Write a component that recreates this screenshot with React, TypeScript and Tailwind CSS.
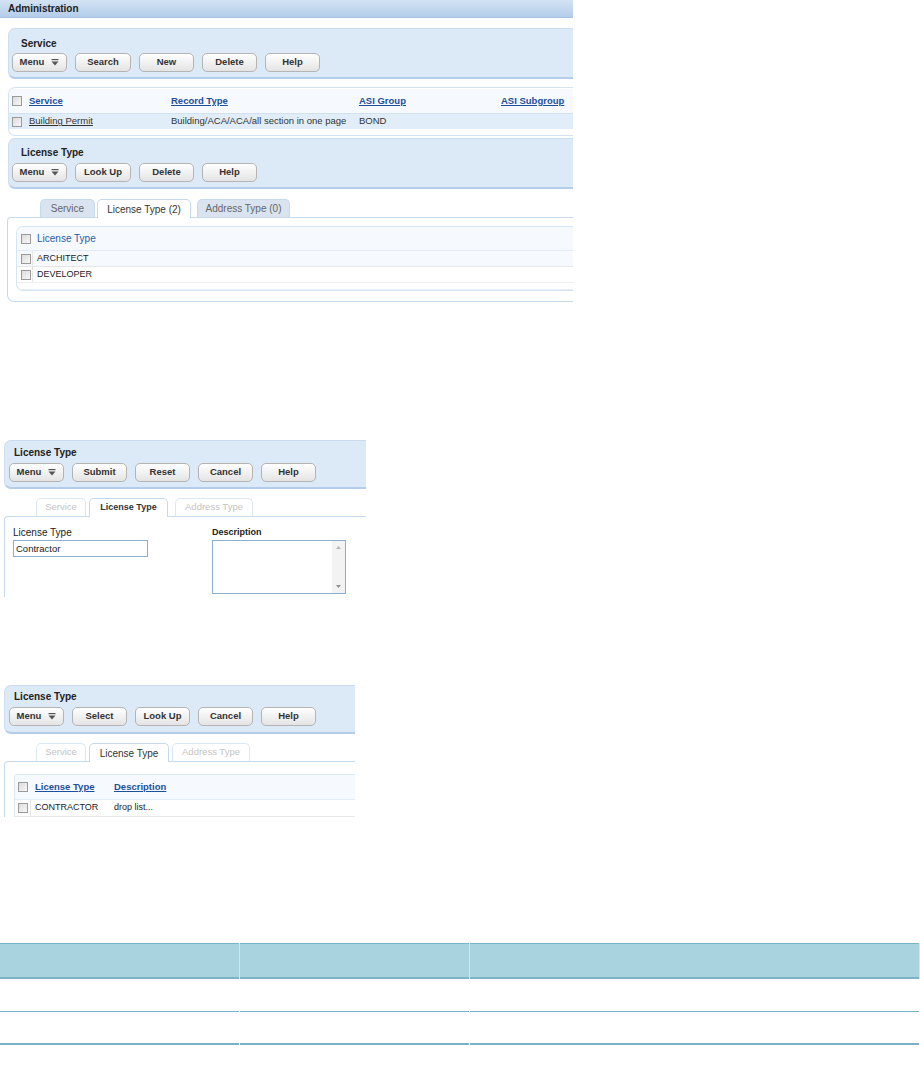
import React from "react";

const font = { fontFamily: '"Liberation Sans", Arial, sans-serif' };

function MenuIcon() {
  return (
    <svg width="8" height="7" viewBox="0 0 8 7" className="ml-[7px]">
      <rect x="0.5" y="0" width="7" height="1.2" fill="#555" />
      <path d="M0.5 2.6 H7.5 L4 6.4 Z" fill="#555" />
    </svg>
  );
}

function Btn({ label, menu, w = 55 }: { label: string; menu?: boolean; w?: number }) {
  return (
    <div
      className="h-[19px] flex items-center justify-center rounded-[5px] border border-[#b4b4b4] bg-gradient-to-b from-[#ffffff] to-[#e4e4e4] text-[9.5px] font-bold text-[#333] whitespace-nowrap shadow-[inset_0_1px_0_#fff]"
      style={{ width: w }}
    >
      {label}
      {menu && <MenuIcon />}
    </div>
  );
}

function Check() {
  return (
    <span className="inline-block w-[10px] h-[10px] border border-[#9a9a9a] bg-gradient-to-br from-[#dcdcdc] to-[#f8f8f8] shrink-0" />
  );
}

function ActionPanel({
  title,
  buttons,
  className,
  titlePad,
  btnPad,
}: {
  title: string;
  buttons: { label: string; menu?: boolean; w?: number }[];
  className: string;
  titlePad: string;
  btnPad: string;
}) {
  return (
    <div
      className={
        "rounded-l-[7px] bg-[#dce9f6] border-t border-t-[#cbdcef] border-b-2 border-b-[#b3cdea] border-l border-l-[#cfdff0] " +
        className
      }
    >
      <div className={"text-[10px] font-bold text-[#222] leading-[13px] whitespace-nowrap " + titlePad}>{title}</div>
      <div className={"flex gap-[8px] " + btnPad}>
        {buttons.map((b) => (
          <Btn key={b.label} label={b.label} menu={b.menu} w={b.w} />
        ))}
      </div>
    </div>
  );
}

function Tab({
  label,
  state,
  w,
  bold,
}: {
  label: string;
  state: "active" | "inactive" | "disabled";
  w: number;
  bold?: boolean;
}) {
  const cls =
    state === "active"
      ? "bg-white text-[#333] border-[#c6daee] h-[19px] -mb-px text-[10px]"
      : state === "inactive"
      ? "bg-[#d9e4f0] text-[#666] border-[#c6daee] h-[18px] text-[10px]"
      : "bg-white text-[#c4c4c4] border-[#dde8f3] h-[18px] text-[9.5px]";
  return (
    <div
      className={
        "flex items-center justify-center rounded-t-[5px] border border-b-0 whitespace-nowrap " +
        cls +
        (bold ? " font-bold !text-[9px]" : "")
      }
      style={{ width: w }}
    >
      {label}
    </div>
  );
}

export default function App() {
  return (
    <div className="w-[920px] min-h-[1079px] bg-white" style={font}>
      {/* Section 1 */}
      <div className="w-[573px] h-[305px] overflow-hidden">
        <div className="h-[18px] bg-gradient-to-b from-[#d3e3f3] to-[#b4cdea] border-b border-b-[#a6c3e4] pl-[8px] text-[10px] font-bold text-[#222] leading-[17px]">
          Administration
        </div>
        <div className="pl-[8px] pt-[10px]">
          <ActionPanel
            title="Service"
            className="h-[51px]"
            titlePad="pl-[12px] pt-[8px]"
            btnPad="pl-[3px] pt-[3px]"
            buttons={[
              { label: "Menu", menu: true, w: 55 },
              { label: "Search", w: 56 },
              { label: "New", w: 55 },
              { label: "Delete", w: 55 },
              { label: "Help", w: 55 },
            ]}
          />
          {/* service table */}
          <div className="mt-[8px] h-[49px] rounded-l-[7px] border border-r-0 border-[#d3e3f2] bg-white overflow-hidden">
            <div className="h-[24px] mt-[1px] bg-[#f6f9fd] flex items-center text-[9.5px] font-bold whitespace-nowrap">
              <div className="w-[20px] pl-[3px] flex items-center">
                <Check />
              </div>
              <div className="w-[142px] text-[#1d4f9a] underline">Service</div>
              <div className="w-[188px] text-[#1d4f9a] underline">Record Type</div>
              <div className="w-[142px] text-[#1d4f9a] underline">ASI Group</div>
              <div className="text-[#1d4f9a] underline">ASI Subgroup</div>
            </div>
            <div className="h-[16px] bg-[#e1eef9] border-t border-[#d0e2f2] flex items-center text-[9.5px] text-[#333] whitespace-nowrap">
              <div className="w-[20px] pl-[3px] flex items-center">
                <Check />
              </div>
              <div className="w-[142px] underline">Building Permit</div>
              <div className="w-[188px]">Building/ACA/ACA/all section in one page</div>
              <div className="w-[142px]">BOND</div>
            </div>
          </div>
          <ActionPanel
            title="License Type"
            className="h-[51px] mt-[2px]"
            titlePad="pl-[12px] pt-[7px]"
            btnPad="pl-[3px] pt-[4px]"
            buttons={[
              { label: "Menu", menu: true, w: 55 },
              { label: "Look Up", w: 56 },
              { label: "Delete", w: 55 },
              { label: "Help", w: 55 },
            ]}
          />
        </div>
        {/* tabs */}
        <div className="pl-[7px] mt-[10px]">
          <div className="flex items-end gap-[2px] pl-[33px] h-[18px]">
            <Tab label="Service" state="inactive" w={55} />
            <Tab label="License Type (2)" state="active" w={94} />
            <div className="w-[2px]" />
            <Tab label="Address Type (0)" state="inactive" w={93} />
          </div>
          <div className="h-[85px] rounded-bl-[7px] rounded-tl-[4px] border border-r-0 border-[#c6daee] pl-[8px] pt-[8px]">
            <div className="h-[65px] rounded-l-[7px] border border-r-0 border-[#d6e5f3] overflow-hidden">
              <div className="h-[24px] bg-[#f6f9fd] flex items-center text-[10px] text-[#1f5cab] border-b border-[#e2ecf6]">
                <div className="w-[16px] pl-[4px] flex items-center">
                  <Check />
                </div>
                <div className="pl-[4px]">License Type</div>
              </div>
              <div className="h-[16px] bg-[#f6f9fd] flex items-center text-[9px] text-[#222] border-b border-[#e6e6e6]">
                <div className="w-[16px] h-full pl-[4px] flex items-center border-r border-[#e6e6e6]">
                  <Check />
                </div>
                <div className="pl-[4px]">ARCHITECT</div>
              </div>
              <div className="h-[16px] flex items-center text-[9px] text-[#222] border-b border-[#eeeeee]">
                <div className="w-[16px] h-full pl-[4px] flex items-center border-r border-[#e6e6e6]">
                  <Check />
                </div>
                <div className="pl-[4px]">DEVELOPER</div>
              </div>
              <div className="h-[7px] border-b border-[#e6eef6]" />
            </div>
          </div>
        </div>
      </div>

      {/* Section 2 */}
      <div className="w-[366px] h-[157px] mt-[135px] overflow-hidden">
        <div className="pl-[4px]">
          <ActionPanel
            title="License Type"
            className="h-[49px]"
            titlePad="pl-[9px] pt-[5px]"
            btnPad="pl-[4px] pt-[4px]"
            buttons={[
              { label: "Menu", menu: true, w: 55 },
              { label: "Submit", w: 55 },
              { label: "Reset", w: 55 },
              { label: "Cancel", w: 55 },
              { label: "Help", w: 55 },
            ]}
          />
        </div>
        <div className="pl-[4px] mt-[9px]">
          <div className="flex items-end gap-[3px] pl-[32px] h-[18px]">
            <Tab label="Service" state="disabled" w={50} />
            <Tab label="License Type" state="active" w={79} bold />
            <div className="w-px" />
            <Tab label="Address Type" state="disabled" w={78} />
          </div>
          <div className="h-[82px] rounded-tl-[4px] border-t border-l border-[#c6daee] flex pt-[9px]">
            <div className="w-[207px] pl-[8px]">
              <div className="text-[10px] text-[#222] leading-[13px]">License Type</div>
              <div className="mt-[1px] w-[135px] h-[17px] border border-[#8eaed0] text-[9.5px] text-[#222] pl-[2px] leading-[15px]">
                Contractor
              </div>
            </div>
            <div>
              <div className="text-[9px] font-bold text-[#222] leading-[13px]">Description</div>
              <div className="mt-[1px] w-[134px] h-[54px] border border-[#8eaed0] flex justify-end">
                <div className="w-[13px] h-full bg-[#f3f3f3] flex flex-col items-center justify-between py-[5px]">
                  <svg width="5" height="3" viewBox="0 0 5 3">
                    <path d="M0 3 L2.5 0 L5 3 Z" fill="#b8b8b8" />
                  </svg>
                  <svg width="5" height="3" viewBox="0 0 5 3">
                    <path d="M0 0 L2.5 3 L5 0 Z" fill="#909090" />
                  </svg>
                </div>
              </div>
            </div>
          </div>
        </div>
      </div>

      {/* Section 3 */}
      <div className="w-[355px] h-[132px] mt-[88px] overflow-hidden">
        <div className="pl-[4px]">
          <ActionPanel
            title="License Type"
            className="h-[49px]"
            titlePad="pl-[9px] pt-[4px]"
            btnPad="pl-[4px] pt-[4px]"
            buttons={[
              { label: "Menu", menu: true, w: 55 },
              { label: "Select", w: 55 },
              { label: "Look Up", w: 55 },
              { label: "Cancel", w: 55 },
              { label: "Help", w: 55 },
            ]}
          />
        </div>
        <div className="pl-[4px] mt-[8px]">
          <div className="flex items-end gap-[3px] pl-[32px] h-[19px]">
            <Tab label="Service" state="disabled" w={50} />
            <Tab label="License Type" state="active" w={80} />
            <Tab label="Address Type" state="disabled" w={78} />
          </div>
          <div className="h-[60px] rounded-tl-[4px] border-t border-l border-[#c6daee] pl-[9px] pt-[12px]">
            <div className="border-t border-l border-[#dde8f3] rounded-tl-[3px]">
              <div className="h-[25px] bg-[#f6f9fd] flex items-center text-[9.5px] font-bold text-[#1d4f9a] border-b border-[#e2ecf6] whitespace-nowrap">
                <div className="w-[16px] pl-[3px] flex items-center">
                  <Check />
                </div>
                <div className="w-[83px] pl-[4px] underline">License Type</div>
                <div className="underline">Description</div>
              </div>
              <div className="h-[17px] flex items-center text-[9px] text-[#222] border-b border-[#e8e8e8] whitespace-nowrap">
                <div className="w-[16px] h-full pl-[3px] flex items-center border-r border-[#e6e6e6]">
                  <Check />
                </div>
                <div className="w-[83px] pl-[4px]">CONTRACTOR</div>
                <div>drop list...</div>
              </div>
            </div>
          </div>
        </div>
      </div>

      {/* Bottom table */}
      <div className="mt-[126px] w-[920px]">
        <div className="grid grid-cols-[239px_229px_449px] gap-x-px bg-[#d2e8f0]">
          <div className="h-[36px] bg-[#aad3e0] border-t border-t-[#7ab2c6] border-b-2 border-b-[#7ab2c6]" />
          <div className="h-[36px] bg-[#aad3e0] border-t border-t-[#7ab2c6] border-b-2 border-b-[#7ab2c6]" />
          <div className="h-[36px] bg-[#aad3e0] border-t border-t-[#7ab2c6] border-b-2 border-b-[#7ab2c6]" />
        </div>
        <div className="grid grid-cols-[239px_229px_449px] gap-x-px bg-white">
          <div className="h-[33px] border-b border-b-[#7ab2c6]" />
          <div className="h-[33px] border-b border-b-[#7ab2c6]" />
          <div className="h-[33px] border-b border-b-[#7ab2c6]" />
        </div>
        <div className="grid grid-cols-[239px_229px_449px] gap-x-px bg-white">
          <div className="h-[33px] border-b-2 border-b-[#7ab2c6]" />
          <div className="h-[33px] border-b-2 border-b-[#7ab2c6]" />
          <div className="h-[33px] border-b-2 border-b-[#7ab2c6]" />
        </div>
      </div>
    </div>
  );
}
